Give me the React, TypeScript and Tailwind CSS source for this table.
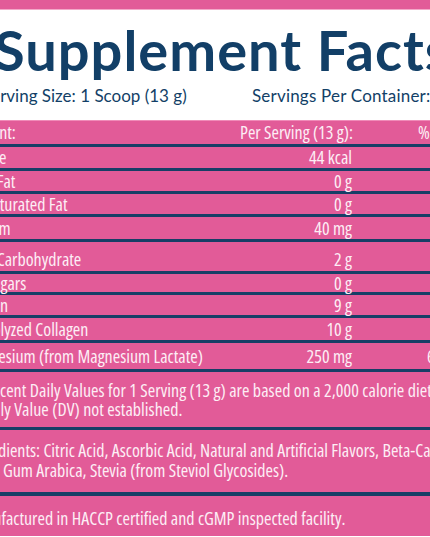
type Row = { label: string; value: string; dv?: string; h: string; indent?: boolean };

const rows: Row[] = [
  { label: 'Calorie', value: '44 kcal', h: 'h-[21px]' },
  { label: 'Total Fat', value: '0 g', h: 'h-[20px]' },
  { label: 'Saturated Fat', value: '0 g', h: 'h-[20px]', indent: true },
  { label: 'Sodium', value: '40 mg', h: 'h-[22px]' },
  { label: 'Total Carbohydrate', value: '2 g', h: 'h-[29px] pt-[6px]' },
  { label: 'Sugars', value: '0 g', h: 'h-[18px]', indent: true },
  { label: 'Protein', value: '9 g', h: 'h-[20px]' },
  { label: 'Hydrolyzed Collagen', value: '10 g', h: 'h-[22px]' },
  { label: 'Magnesium (from Magnesium Lactate)', value: '250 mg', dv: '60%', h: 'h-[26px]' },
];

function Sep() {
  return <div className="h-[3px] bg-[#173e66]" />;
}

export default function App() {
  return (
    <div className="w-[430px] h-[537px] overflow-hidden bg-white">
      <div className="h-[9px] bg-[#e25b98]" />
      <div className="h-[1px] bg-[#f3a9c9]" />

      <div className="h-[110px] font-['Lato',sans-serif] text-[#123f67]">
        <h1 className="ml-[-6px] pt-[6px] whitespace-nowrap text-[56px] font-bold leading-[68px] tracking-[1px]">
          Supplement Facts
        </h1>
        <div className="flex ml-[-18px] mt-[2px] text-[17px] leading-[20px] whitespace-nowrap">
          <span className="w-[270px] shrink-0">Serving Size: 1 Scoop (13 g)</span>
          <span className="shrink-0 tracking-[0.2px]">Servings Per Container: 30</span>
        </div>
      </div>

      <div className="bg-[#e25b98] text-[#fdeef5] text-[18px] font-['Open_Sans',sans-serif] [font-stretch:75%]">
        <div className="h-[1px] bg-[#f08cb9]" />
        <div className="flex items-center h-[23px] ml-[-37px] whitespace-nowrap">
          <span className="w-[277px] shrink-0">Amount:</span>
          <span className="w-[112px] shrink-0 text-right">Per Serving (13 g):</span>
          <span className="ml-[66px] shrink-0">% Daily Value*</span>
        </div>
        <Sep />
        {rows.map((r) => (
          <div key={r.label}>
            <div className={`flex items-center ml-[-37px] whitespace-nowrap ${r.h}`}>
              <span className={r.indent ? 'w-[277px] shrink-0 pl-[22px]' : 'w-[277px] shrink-0'}>{r.label}</span>
              <span className="w-[112px] shrink-0 text-right">{r.value}</span>
              {r.dv && <span className="ml-[75px] shrink-0">{r.dv}</span>}
            </div>
            <Sep />
          </div>
        ))}

        <div className="h-[55px] pt-[9px] ml-[-28px] leading-[19px] tracking-[0.04px] whitespace-nowrap">
          <div>*Percent Daily Values for 1 Serving (13 g) are based on a 2,000 calorie diet.</div>
          <div>†Daily Value (DV) not established.</div>
        </div>
        <Sep />

        <div className="h-[62px] pt-[10px] leading-[20px] whitespace-nowrap">
          <div className="ml-[-34px]">Ingredients: Citric Acid, Ascorbic Acid, Natural and Artificial Flavors, Beta-Carotene,</div>
          <div className="ml-[3px]">Gum Arabica, Stevia (from Steviol Glycosides).</div>
        </div>
        <div className="h-[4px] bg-[#173e66]" />

        <div className="h-[40px] pt-[12px] ml-[-35px] leading-[20px] whitespace-nowrap">
          Manufactured in HACCP certified and cGMP inspected facility.
        </div>
      </div>
    </div>
  );
}
